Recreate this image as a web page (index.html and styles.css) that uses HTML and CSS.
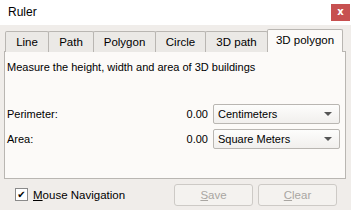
FILE: index.html
```html
<!DOCTYPE html>
<html>
<head>
<meta charset="utf-8">
<link rel="stylesheet" href="styles.css">
</head>
<body>
<div class="window">
  <div class="titlebar">
    <span class="title">Ruler</span>
    <span class="close">x</span>
  </div>
  <div class="content">
    <div class="tabs">
      <div class="tab t-line">Line</div>
      <div class="tab t-path">Path</div>
      <div class="tab t-poly">Polygon</div>
      <div class="tab t-circle">Circle</div>
      <div class="tab t-3dpath">3D path</div>
      <div class="tab active t-3dpoly">3D polygon</div>
    </div>
    <div class="pane">
      <div class="desc">Measure the height, width and area of 3D buildings</div>
      <div class="row row-first">
        <span class="label">Perimeter:</span>
        <span class="value">0.00</span>
        <div class="combo"><span>Centimeters</span><span class="arrow"></span></div>
      </div>
      <div class="row">
        <span class="label">Area:</span>
        <span class="value">0.00</span>
        <div class="combo"><span>Square Meters</span><span class="arrow"></span></div>
      </div>
    </div>
    <div class="footer">
      <label class="check"><span class="box">&#10004;</span><span><u>M</u>ouse Navigation</span></label>
      <div class="buttons">
        <div class="btn"><u>S</u>ave</div>
        <div class="btn"><u>C</u>lear</div>
      </div>
    </div>
  </div>
</div>
</body>
</html>
```
FILE: styles.css
```css
html, body {
  margin: 0;
  padding: 0;
}
body {
  width: 351px;
  height: 210px;
  overflow: hidden;
  font-family: "Liberation Sans", sans-serif;
  font-size: 11px;
  color: #000;
}
.window {
  width: 351px;
  height: 210px;
  display: flex;
  flex-direction: column;
  background: #f0edea;
}
.titlebar {
  height: 25px;
  background: #ffffff;
  display: flex;
  align-items: flex-start;
  justify-content: space-between;
}
.title {
  font-size: 12px;
  margin: 5px 0 0 8px;
}
.close {
  width: 19px;
  height: 17px;
  margin: 4px 1px 0 0;
  background: #c75050;
  color: #fff;
  font-family: "DejaVu Sans", sans-serif;
  font-weight: bold;
  font-size: 10px;
  line-height: 16px;
  text-align: center;
}
.content {
  flex: 1;
  padding: 4px 5px 0 4px;
  display: flex;
  flex-direction: column;
}
.tabs {
  display: flex;
  align-items: flex-end;
  height: 23px;
  padding-left: 1px;
  position: relative;
  z-index: 1;
  margin-bottom: -1px;
}
.tab {
  height: 20px;
  line-height: 21px;
  text-align: center;
  background: #ebe9e6;
  border: 1px solid #b9b6b2;
  border-bottom: none;
  border-radius: 2px 2px 0 0;
  margin-right: -1px;
  font-size: 11.5px;
  color: #000;
}
.t-line { width: 42px; }
.t-path { width: 44px; }
.t-poly { width: 61px; }
.t-circle { width: 49px; }
.t-3dpath { width: 61px; }
.tab.active {
  width: 74px;
  height: 22px;
  line-height: 21px;
  background: #fcfaf8;
  border-color: #b9b6b2;
  margin-right: 0;
}
.pane {
  height: 126px;
  background: #fcfaf8;
  border: 1px solid #b9b6b2;
  font-size: 11px;
}
.desc {
  margin: 9px 0 0 2px;
}
.row {
  display: flex;
  align-items: center;
  height: 20px;
  margin-top: 5px;
  padding-left: 2px;
}
.row-first {
  margin-top: 31px;
}
.label {
  flex: 1;
}
.value {
  margin-right: 5px;
}
.combo {
  width: 127px;
  height: 20px;
  border: 1px solid #b9b6b2;
  border-radius: 2px;
  background: linear-gradient(#fdfdfc, #f1efed);
  display: flex;
  align-items: center;
  justify-content: space-between;
  padding-left: 4px;
  box-sizing: border-box;
  margin-right: 5px;
}
.arrow {
  width: 0;
  height: 0;
  border-left: 4px solid transparent;
  border-right: 4px solid transparent;
  border-top: 4px solid #555;
  margin-right: 7px;
}
.footer {
  flex: 1;
  display: flex;
  align-items: center;
  justify-content: space-between;
  padding-left: 11px;
}
.check {
  display: flex;
  align-items: center;
  gap: 5px;
  font-size: 11.5px;
}
.box {
  width: 11px;
  height: 11px;
  border: 1px solid #8a8a8a;
  background: #fff;
  font-family: "DejaVu Sans", sans-serif;
  font-size: 10px;
  font-weight: bold;
  line-height: 11px;
  text-align: center;
  color: #000;
}
.buttons {
  display: flex;
  gap: 5px;
  margin-right: 9px;
}
.btn {
  width: 77px;
  height: 20px;
  border: 1px solid #cdcac6;
  border-radius: 3px;
  background: #f4f2ef;
  color: #a9a6a2;
  text-align: center;
  line-height: 20px;
  font-size: 11.5px;
}
```
